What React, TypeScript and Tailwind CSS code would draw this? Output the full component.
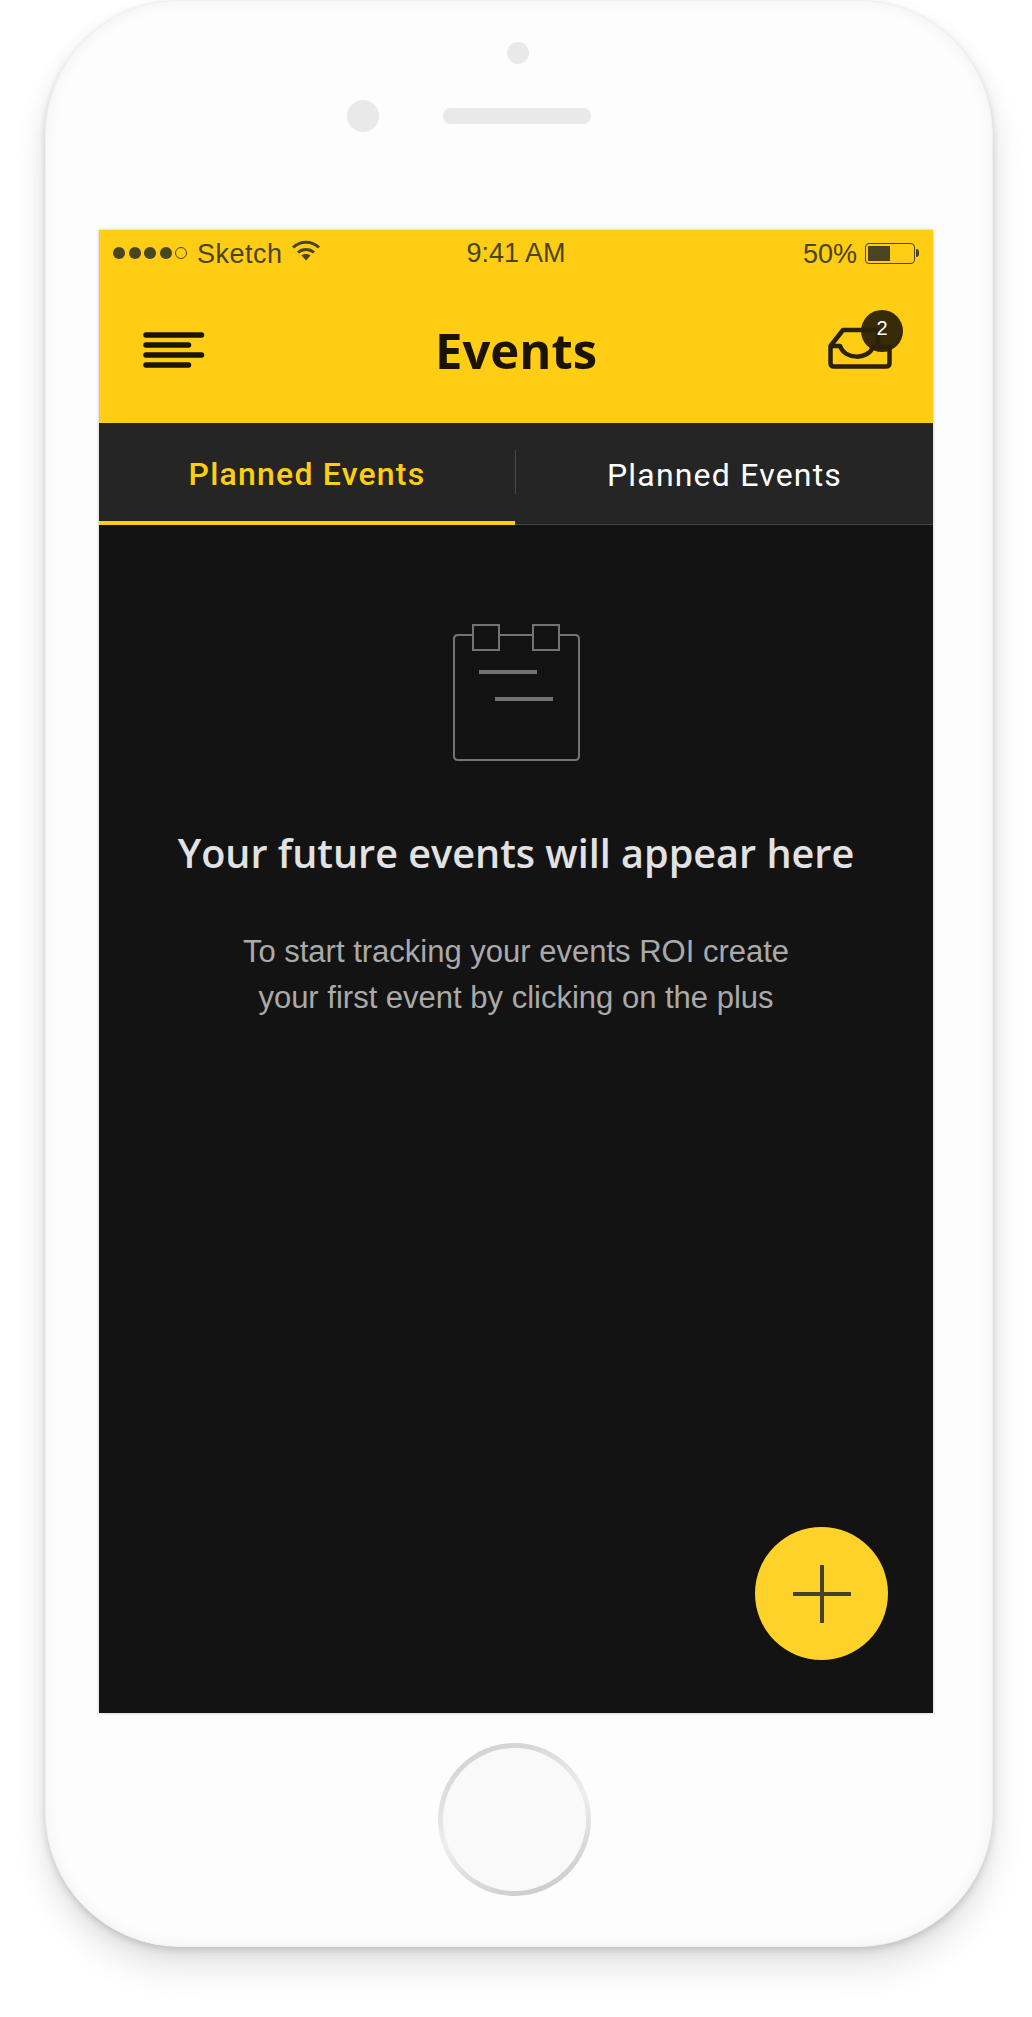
const MenuIcon = () => (
  <svg width="62" height="36" viewBox="0 0 62 36" fill="none" stroke="#1b1404" strokeWidth="5.500" strokeLinecap="round">
    <path d="M3 3H58.500M3 13H45.500M3 23H58.500M3 33H45.500" />
  </svg>
);

const WifiIcon = () => (
  <svg width="30" height="22" viewBox="0 0 30 22" fill="none" stroke="#4a4420" strokeWidth="3">
    <path d="M2 7.500C9.500 .5 20.500 .5 28 7.500" />
    <path d="M7 12.500C11.500 8.500 18.500 8.500 23 12.500" />
    <path d="M10.500 15.500L15 20.500L19.500 15.500C17 13.500 13 13.500 10.500 15.500Z" fill="#4a4420" stroke="none" />
  </svg>
);

const TrayIcon = () => (
  <svg width="64" height="42" viewBox="0 0 64 42" fill="none" stroke="#2a2108" strokeWidth="4.500" strokeLinejoin="round">
    <path d="M2.500 19L15 3H50V20H61.500V36C61.500 38.500 60 39.500 58 39.500H6C4 39.500 2.500 38.500 2.500 36Z" />
    <path d="M2.500 19H12C17 33 40 33 45 20H61.500" />
  </svg>
);

const NotepadIcon = () => (
  <svg width="127" height="137" viewBox="0 0 127 137" fill="none" stroke="#747474" strokeWidth="2">
    <path d="M20 11H5C2.500 11 1 12.500 1 15V132C1 134.500 2.500 136 5 136H122C124.500 136 126 134.500 126 132V15C126 12.500 124.500 11 122 11H106M46 11H80" />
    <rect x="20" y="1" width="26" height="25" />
    <rect x="80" y="1" width="26" height="25" />
    <path d="M26 48H84M42 75H100" strokeWidth="4" />
  </svg>
);

export default function App() {
  return (
    <div className="w-[1032px] h-[2017px] overflow-hidden bg-white font-['Liberation_Sans',sans-serif]">
      <div className="ml-[45px] w-[948px] h-[1947px] rounded-[135px] bg-[#fdfdfd] border border-[#f0f0f0] flex flex-col shadow-[0_3px_6px_rgba(0,0,0,0.12),0_22px_34px_rgba(0,0,0,0.1),-6px_6px_18px_rgba(0,0,0,0.03),6px_6px_18px_rgba(0,0,0,0.03),inset_0_0_16px_rgba(0,0,0,0.05)]">
        {/* top bezel */}
        <div className="ml-[461px] mt-[41px] w-[22px] h-[22px] rounded-full bg-[#e9e9e9]" />
        <div className="ml-[301px] mt-[36px] flex items-center gap-[64px]">
          <div className="w-[32px] h-[32px] rounded-full bg-[#e9e9e9]" />
          <div className="w-[148px] h-[16px] rounded-full bg-[#e9e9e9]" />
        </div>

        {/* screen */}
        <div className="relative ml-[53px] mt-[98px] w-[834px] h-[1483px] bg-[#131313] shrink-0 flex flex-col shadow-[0_0_3px_rgba(0,0,0,0.25)]">
          <div className="h-[193px] bg-[#fecd14] flex flex-col">
            <div className="grid grid-cols-3 items-center h-[44px] mt-[1px] px-[14px] text-[27px] font-light text-[#4a4420]">
              <div className="flex items-center">
                <div className="flex items-center gap-[3.500px]">
                  <span className="w-[12px] h-[12px] rounded-full bg-[#4a4420]" />
                  <span className="w-[12px] h-[12px] rounded-full bg-[#4a4420]" />
                  <span className="w-[12px] h-[12px] rounded-full bg-[#4a4420]" />
                  <span className="w-[12px] h-[12px] rounded-full bg-[#4a4420]" />
                  <span className="w-[12px] h-[12px] rounded-full border border-[#4a4420]" />
                </div>
                <span className="ml-[10px] tracking-[0.5px] leading-none mt-[3px]">Sketch</span>
                <span className="ml-[8px] -mt-[4px]"><WifiIcon /></span>
              </div>
              <div className="text-center leading-none">9:41 AM</div>
              <div className="flex items-center justify-end">
                <span className="leading-none mt-[3px] mr-[8px]">50%</span>
                <div className="w-[50px] h-[21px] rounded-[4px] border border-[#4a4420] p-[2px]">
                  <div className="w-[22px] h-full bg-[#4a4420]" />
                </div>
                <span className="w-[3px] h-[8px] rounded-r-full bg-[#4a4420] ml-[1px]" />
              </div>
            </div>
            <div className="flex-1 relative flex items-center justify-center pt-[2px] px-[44px]">
              <div className="absolute left-[44px] top-[57px]"><MenuIcon /></div>
              <h1 className="font-['Open_Sans',sans-serif] font-bold text-[49px] leading-none text-[#1b1404]">Events</h1>
              <div className="absolute left-[729px] top-[52px]">
                <TrayIcon />
                <div className="absolute left-[33px] -top-[17px] w-[42px] h-[42px] rounded-full bg-[#2b2108]/95 flex items-center justify-center pb-[6px] text-[20px] text-white leading-none">2</div>
              </div>
            </div>
          </div>

          {/* tabs */}
          <div className="flex h-[102px] bg-[#252525] border-b border-[#444444] font-['Roboto',sans-serif] text-[32px] tracking-[1.2px]">
            <div className="w-[416px] h-[102px] border-b-[4px] border-[#fecd14] flex items-center justify-center font-medium text-[#fecd14] pt-[4px]">Planned Events</div>
            <div className="w-px h-[44px] mt-[27px] bg-[#4a4a4a]" />
            <div className="flex-1 flex items-center justify-center text-white pt-[2px]">Planned Events</div>
          </div>

          {/* empty state */}
          <div className="flex flex-col items-center pt-[99px]">
            <NotepadIcon />
            <h2 className="mt-[66px] font-['Open_Sans',sans-serif] font-semibold text-[39.600px] leading-[52px] text-[#e2e2e2]">Your future events will appear here</h2>
            <p className="mt-[50px] text-center text-[31px] leading-[46px] text-[#aaaaaa]">
              To start tracking your events ROI create
              <br />
              your first event by clicking on the plus
            </p>
          </div>

          {/* add button */}
          <button className="absolute right-[45px] bottom-[53px] w-[133px] h-[133px] rounded-full bg-[#ffd22a] flex items-center justify-center">
            <svg width="58" height="58" viewBox="0 0 58 58" stroke="#45412c" strokeWidth="4">
              <path d="M29 0V58M0 29H58" />
            </svg>
          </button>
        </div>

        {/* home button */}
        <div className="ml-[392px] mt-[30px] w-[153px] h-[153px] rounded-full bg-linear-160 from-[#cccccc] via-[#eeeeee] to-[#c4c4c4] p-[5px]">
          <div className="w-full h-full rounded-full bg-[#f9f9f9]" />
        </div>
      </div>
    </div>
  );
}
